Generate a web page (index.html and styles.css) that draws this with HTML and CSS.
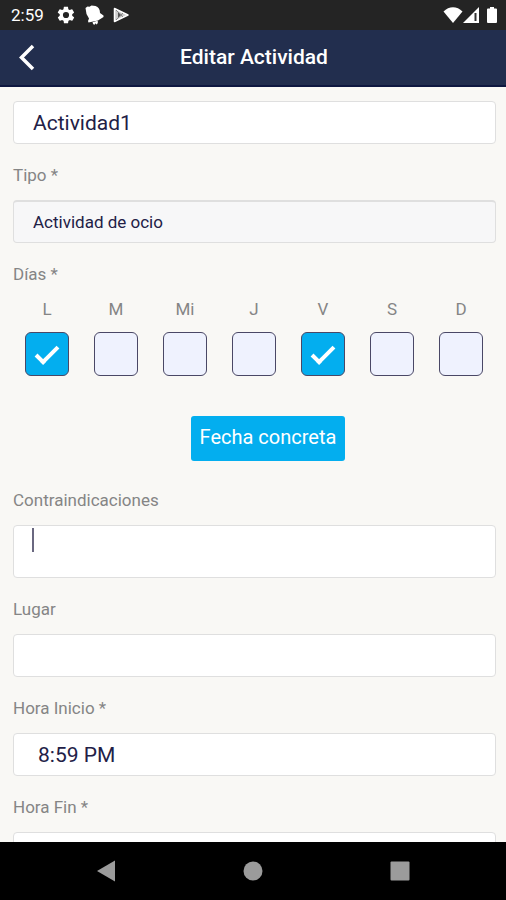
FILE: index.html
```html
<!DOCTYPE html>
<html lang="es">
<head>
    <meta charset="UTF-8">
    <meta name="viewport" content="width=device-width, initial-scale=1.0">
    <title>Editar Actividad</title>
    <link rel="stylesheet" href="styles.css">
</head>
<body>
    <div class="status-bar">
        <div class="status-left">
            <span class="clock">2:59</span>
            <svg class="gear" width="20" height="20" viewBox="0 0 24 24" fill="#fff"><path fill-rule="evenodd" d="M19.4 13c0-.3.1-.6.1-1s0-.7-.1-1l2.1-1.6c.2-.2.2-.4.1-.6l-2-3.5c-.1-.2-.4-.3-.6-.2l-2.5 1c-.5-.4-1.100-.7-1.700-1l-.4-2.600c0-.2-.2-.4-.5-.4h-4c-.2 0-.4.2-.5.4l-.4 2.600c-.6.3-1.200.6-1.700 1l-2.500-1c-.2-.1-.5 0-.6.2l-2 3.500c-.1.2-.1.5.1.6L4.500 11c0 .3-.1.700-.1 1s0 .7.1 1l-2.100 1.600c-.2.2-.2.4-.1.6l2 3.500c.1.2.4.3.6.2l2.500-1c.5.4 1.100.7 1.700 1l.4 2.600c0 .2.2.4.5.4h4c.2 0 .5-.2.5-.4l.4-2.600c.6-.3 1.200-.6 1.700-1l2.500 1c.2.1.5 0 .6-.2l2-3.500c.1-.2.1-.5-.1-.6L19.400 13zM12 15.700a3.700 3.700 0 1 1 0-7.400 3.700 3.700 0 0 1 0 7.400z"/></svg>
            <svg class="bell" width="20" height="20" viewBox="0 0 20 20" fill="#fff"><path d="M1.500 3 3.500 1.500l2 .2 2-1.200 4 .5c3 1 4.500 3.500 4.500 7l3.500 2.500v1.500L14 15.500l-9.500 2-.5-1.500 1-2.500L2.500 9z"/><path d="M8.500 17.300l5-1.500c.8 1.500.3 3-1 3.700l-1.200-1.200-.6 1.500c-1.200 0-1.800-.8-2.200-2.500z"/></svg>
            <svg class="play" width="18" height="18" viewBox="0 0 18 18"><path d="M2.500 2.500v13L16 9z" fill="#ccc" stroke="#fff" stroke-width="1.500" stroke-linejoin="round"/><path d="M6 6.500 10.500 9 6 11.500z" fill="#555"/><path d="m4 4 7 7M4 14l7-7" fill="none" stroke="#888"/></svg>
        </div>
        <div class="status-right">
            <svg width="20" height="18" viewBox="0 0 20 18" fill="#fff"><path d="M.5 5.500C6-.3 14-.3 19.500 5.500L10 17z"/></svg>
            <svg width="16" height="18" viewBox="0 0 16 18"><path fill="#fff" d="M16 1v16H0z"/><path d="M12.500 7v8" stroke="#333" stroke-width="2"/></svg>
            <svg class="battery" width="12" height="18" viewBox="0 0 12 18" fill="#fff"><path d="M4 1h4v1.500h2q1 0 1 1V16q0 1-1 1H2q-1 0-1-1V3.500q0-1 1-1h2z"/></svg>
        </div>
    </div>

    <header class="header">
        <button class="back" type="button" aria-label="Volver">
            <svg width="18" height="28" viewBox="0 0 18 28" fill="none" stroke="#fff" stroke-width="3.500"><path d="M16 3 4.500 14.500 16 26"/></svg>
        </button>
        <h1>Editar Actividad</h1>
    </header>

    <main class="content">
        <form class="form">
            <input class="field" type="text" value="Actividad1" aria-label="Nombre">

            <label class="label" for="tipo">Tipo *</label>
            <select class="field select" id="tipo">
                <option>Actividad de ocio</option>
            </select>

            <fieldset class="days">
                <legend class="label">Días *</legend>
                <div class="days-row">
                    <label class="day">L<input type="checkbox" checked></label>
                    <label class="day">M<input type="checkbox"></label>
                    <label class="day">Mi<input type="checkbox"></label>
                    <label class="day">J<input type="checkbox"></label>
                    <label class="day">V<input type="checkbox" checked></label>
                    <label class="day">S<input type="checkbox"></label>
                    <label class="day">D<input type="checkbox"></label>
                </div>
            </fieldset>

            <div class="date-row">
                <button class="date-button" type="button">Fecha concreta</button>
            </div>

            <label class="label" for="contra">Contraindicaciones</label>
            <div class="textarea-wrap">
                <textarea class="field textarea" id="contra"></textarea>
                <span class="caret"></span>
            </div>

            <label class="label" for="lugar">Lugar</label>
            <input class="field" type="text" id="lugar">

            <label class="label" for="inicio">Hora Inicio *</label>
            <input class="field time" type="text" id="inicio" value="8:59 PM">

            <label class="label" for="fin">Hora Fin *</label>
            <input class="field time" type="text" id="fin">
        </form>
    </main>

    <nav class="nav-bar">
        <button type="button" aria-label="Atrás"><svg width="20" height="22" viewBox="0 0 20 22" fill="#9b9b9b"><path d="M19 .5v21L1 11z"/></svg></button>
        <button type="button" aria-label="Inicio"><svg width="20" height="20" viewBox="0 0 20 20" fill="#9b9b9b"><circle cx="10" cy="10" r="9.500"/></svg></button>
        <button type="button" aria-label="Recientes"><svg width="20" height="20" viewBox="0 0 20 20" fill="#9b9b9b"><rect x=".5" y=".5" width="19" height="19" rx="1"/></svg></button>
    </nav>
</body>
</html>
```

FILE: styles.css
```css
* {
    box-sizing: border-box;
}

body {
    margin: 0;
    height: 100vh;
    display: flex;
    flex-direction: column;
    overflow: hidden;
    background-color: #f9f8f5;
    color: #222046;
    font-family: Roboto, sans-serif;
}

button,
input,
select,
textarea {
    font-family: inherit;
    margin: 0;
}

svg {
    display: block;
}

.status-bar {
    flex: none;
    height: 30px;
    padding: 0 8px 0 11px;
    display: flex;
    justify-content: space-between;
    align-items: center;
    background-color: #242424;
    color: #ffffff;
}

.status-left,
.status-right {
    display: flex;
    align-items: center;
}

.clock {
    font-size: 17px;
}

.gear {
    margin-left: 12px;
}

.bell {
    margin-left: 8px;
}

.play {
    margin-left: 8px;
}

.battery {
    margin-left: 7px;
}

.header {
    flex: none;
    height: 57px;
    padding-bottom: 2px;
    display: grid;
    grid-template-columns: 54px 1fr 52px;
    align-items: center;
    background-color: #222e4e;
    border-bottom: 2px solid #0e1740;
}

.header h1 {
    margin: 0;
    color: #ffffff;
    font-size: 21px;
    font-weight: 500;
    text-align: center;
}

.back {
    padding: 0 0 0 17px;
    border: none;
    background: none;
    cursor: pointer;
}

.content {
    flex: 1;
    min-height: 0;
    overflow: hidden;
    padding: 14px 10px 0 13px;
}

.label {
    display: block;
    padding: 21px 0 15px;
    color: #858585;
    font-size: 17px;
    line-height: 20px;
}

.field {
    display: block;
    width: 100%;
    height: 43px;
    padding: 0 19px;
    border: 1px solid #dfdfdf;
    border-radius: 4px;
    background-color: #ffffff;
    color: #222046;
    font-size: 21px;
    outline: none;
}

.select {
    appearance: none;
    background-color: #f7f7f8;
    border-top: 2px solid #dfdfdf;
    font-size: 17px;
}

.time {
    padding: 0 24px;
}

.days {
    margin: 0;
    padding: 0;
    border: none;
}

.days-row {
    display: flex;
    justify-content: space-between;
    padding: 0 13px 0 12px;
}

.day {
    width: 44px;
    display: flex;
    flex-direction: column;
    align-items: center;
    gap: 13px;
    color: #858585;
    font-size: 17px;
    line-height: 20px;
}

.day input {
    appearance: none;
    display: grid;
    place-items: center;
    width: 44px;
    height: 44px;
    border: 1px solid #4a4866;
    border-radius: 6px;
    background-color: #eff2fe;
}

.day input:checked {
    background-color: #03aeef;
}

.day input:checked::before {
    content: "";
    box-sizing: border-box;
    width: 12px;
    height: 23px;
    margin-bottom: 4px;
    border: solid #ffffff;
    border-width: 0 4px 4px 0;
    transform: rotate(45deg);
}

.date-row {
    display: flex;
    justify-content: center;
    padding: 40px 0 8px 27px;
}

.date-button {
    height: 45px;
    padding: 0 9px 4px;
    border: none;
    border-radius: 3px;
    background-color: #03aeef;
    color: #ffffff;
    font-size: 20px;
    cursor: pointer;
}

.textarea-wrap {
    position: relative;
}

.textarea {
    height: 53px;
    resize: none;
}

.caret {
    position: absolute;
    top: 3px;
    left: 19px;
    width: 2px;
    height: 24px;
    background-color: #6a6880;
}

.nav-bar {
    flex: none;
    height: 58px;
    padding: 0 33px;
    display: flex;
    background-color: #000000;
}

.nav-bar button {
    flex: 1;
    display: flex;
    justify-content: center;
    align-items: center;
    padding: 0;
    border: none;
    background: none;
    cursor: pointer;
}
```
